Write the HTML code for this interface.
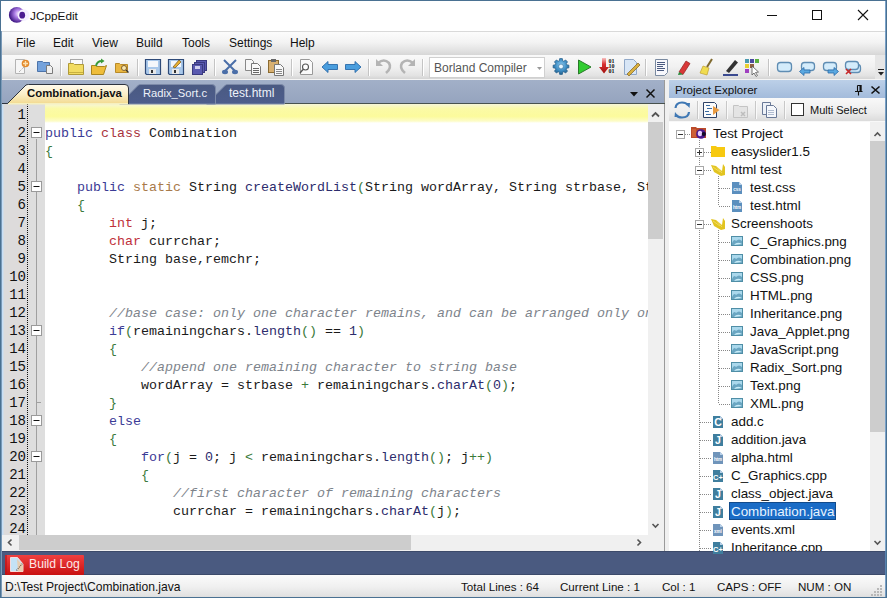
<!DOCTYPE html><html><head><meta charset="utf-8"><style>
*{margin:0;padding:0;box-sizing:border-box}
html,body{width:887px;height:598px;overflow:hidden;background:#fff}
body{position:relative;font-family:"Liberation Sans",sans-serif;font-size:12px;color:#000}
.a{position:absolute}
.t{position:absolute;white-space:nowrap;line-height:14px}
#title{left:0;top:0;width:887px;height:32px;background:#fff;border-bottom:1px solid #d9d9d9}
#menu{left:0;top:32px;width:887px;height:23px;background:linear-gradient(#fcfcfc,#f3f3f3 45%,#e2e2e2 80%,#d6d6d6)}
.mi{position:absolute;top:4px;font-size:12px;color:#111;line-height:14px}
#tb{left:0;top:55px;width:887px;height:25px;background:linear-gradient(#f9f9f9,#f1f1f1 50%,#e3e3e3 85%,#d4d4d4);border-bottom:1px solid #f4f4f4}
#tabs{left:0;top:80px;width:665px;height:24px;background:linear-gradient(#a2b0c8,#95a4be)}
#editor{left:0;top:104px;width:665px;height:431px;background:#fff;overflow:hidden}
.ln{position:absolute;left:0;width:26px;text-align:right;font-family:"Liberation Mono",monospace;font-size:14px;color:#111;height:18px;line-height:18px}
#code{left:45px;top:0;width:603px;height:431px;font-family:"Liberation Mono",monospace;font-size:13.33px;color:#1a1a1a}
.cl{height:18px;line-height:18px;padding-top:3px;white-space:pre}
.kw{color:#3b3b96}.cls{color:#a8333d}.st{color:#a87a4a}.br{color:#3a7a3a}.ty{color:#c0303a}.cm{color:#7e848c;font-style:italic}.fn{color:#2c2c6c}
#hsb{left:0;top:535px;width:665px;height:16px;background:#f0f0f0}
#bottombar{left:0;top:551px;width:887px;height:24px;background:#4a5a80;border-top:1px solid #3c4a6a;border-bottom:1px solid #3c4a6a}
#status{left:0;top:575px;width:887px;height:23px;background:linear-gradient(#fbfbfb,#f0f0f0 50%,#e2e2e2 90%,#d8d8d8)}
#split{left:665px;top:80px;width:4px;height:471px;background:#f0f0f0}
#pe{left:669px;top:80px;width:218px;height:471px;background:#fff}
.tr{position:absolute;height:18px;line-height:18px;font-size:13.4px;color:#0a0a0a;white-space:nowrap}
</style></head><body>
<div id="title" class="a"><span class="t" style="left:30px;top:8.5px;font-size:11.8px;color:#111">JCppEdit</span></div>
<div id="menu" class="a"><span class="mi" style="left:16px">File</span><span class="mi" style="left:53px">Edit</span><span class="mi" style="left:92px">View</span><span class="mi" style="left:136px">Build</span><span class="mi" style="left:182px">Tools</span><span class="mi" style="left:229px">Settings</span><span class="mi" style="left:290px">Help</span></div>
<div id="tb" class="a"></div>
<div id="tabs" class="a"></div>
<div id="editor" class="a">
<div class="a" style="left:0;top:0;width:28px;height:431px;background:#dddbdb"></div>
<div class="a" style="left:28px;top:0;width:17px;height:431px;background:#dedede"></div>
<div class="a" style="left:27px;top:0;width:1px;height:431px;background-image:linear-gradient(#111 50%,transparent 50%);background-size:1px 2px"></div>
<div class="ln" style="top:2px">1</div>
<div class="ln" style="top:20px">2</div>
<div class="ln" style="top:38px">3</div>
<div class="ln" style="top:56px">4</div>
<div class="ln" style="top:74px">5</div>
<div class="ln" style="top:92px">6</div>
<div class="ln" style="top:110px">7</div>
<div class="ln" style="top:128px">8</div>
<div class="ln" style="top:146px">9</div>
<div class="ln" style="top:164px">10</div>
<div class="ln" style="top:182px">11</div>
<div class="ln" style="top:200px">12</div>
<div class="ln" style="top:218px">13</div>
<div class="ln" style="top:236px">14</div>
<div class="ln" style="top:254px">15</div>
<div class="ln" style="top:272px">16</div>
<div class="ln" style="top:290px">17</div>
<div class="ln" style="top:308px">18</div>
<div class="ln" style="top:326px">19</div>
<div class="ln" style="top:344px">20</div>
<div class="ln" style="top:362px">21</div>
<div class="ln" style="top:380px">22</div>
<div class="ln" style="top:398px">23</div>
<div class="ln" style="top:416px">24</div>
<div class="a" style="left:45px;top:0;width:603px;height:19px;background:linear-gradient(#f6f6d8,#fbfaa6 25%,#fcfb9c 65%,#fdfcc8 90%,#ffffff)"></div>
<div id="code" class="a"><div class="cl"> </div><div class="cl"><span class="kw">public</span> <span class="cls">class</span> Combination</div><div class="cl"><span class="br">{</span></div><div class="cl"> </div><div class="cl">    <span class="kw">public</span> <span class="st">static</span> String <span class="fn">createWordList</span><span class="br">(</span>String wordArray, String strbase, St</div><div class="cl">    <span class="br">{</span></div><div class="cl">        <span class="ty">int</span> j;</div><div class="cl">        <span class="ty">char</span> currchar;</div><div class="cl">        String base,remchr;</div><div class="cl"> </div><div class="cl"> </div><div class="cl">        <span class="cm">//base case: only one character remains, and can be arranged only on</span></div><div class="cl">        <span class="kw">if</span><span class="br">(</span>remainingchars.<span class="fn">length</span><span class="br">()</span> == <span class="fn">1</span><span class="br">)</span></div><div class="cl">        <span class="br">{</span></div><div class="cl">            <span class="cm">//append one remaining character to string base</span></div><div class="cl">            wordArray = strbase <span class="br">+</span> remainingchars.<span class="fn">charAt</span><span class="br">(</span><span class="fn">0</span><span class="br">)</span>;</div><div class="cl">        <span class="br">}</span></div><div class="cl">        <span class="kw">else</span></div><div class="cl">        <span class="br">{</span></div><div class="cl">            <span class="kw">for</span><span class="br">(</span>j = <span class="fn">0</span>; j <span class="br">&lt;</span> remainingchars.<span class="fn">length</span><span class="br">()</span>; j<span class="br">++)</span></div><div class="cl">            <span class="br">{</span></div><div class="cl">                <span class="cm">//first character of remaining characters</span></div><div class="cl">                currchar = remainingchars.<span class="fn">charAt</span><span class="br">(</span>j<span class="br">)</span>;</div><div class="cl"> </div></div>
</div>
<div id="hsb" class="a"></div>
<div id="split" class="a"></div>
<div id="pe" class="a"></div>
<div id="bottombar" class="a"></div>
<div id="status" class="a"></div>
<svg class="a" style="left:0;top:0" width="887" height="598" viewBox="0 0 887 598">
<line x1="36.5" y1="139" x2="36.5" y2="535" stroke="#a0a0a0"/><line x1="36.5" y1="402.5" x2="41" y2="402.5" stroke="#a0a0a0"/><rect x="31.5" y="127.5" width="10" height="10" fill="#fff" stroke="#9a9a9a"/><line x1="33.5" y1="132.5" x2="39.5" y2="132.5" stroke="#111"/><rect x="31.5" y="181.5" width="10" height="10" fill="#fff" stroke="#9a9a9a"/><line x1="33.5" y1="186.5" x2="39.5" y2="186.5" stroke="#111"/><rect x="31.5" y="325.5" width="10" height="10" fill="#fff" stroke="#9a9a9a"/><line x1="33.5" y1="330.5" x2="39.5" y2="330.5" stroke="#111"/><rect x="31.5" y="415.5" width="10" height="10" fill="#fff" stroke="#9a9a9a"/><line x1="33.5" y1="420.5" x2="39.5" y2="420.5" stroke="#111"/><rect x="31.5" y="451.5" width="10" height="10" fill="#fff" stroke="#9a9a9a"/><line x1="33.5" y1="456.5" x2="39.5" y2="456.5" stroke="#111"/><rect x="648" y="104" width="16" height="431" fill="#f0f0f0"/><rect x="648" y="122" width="15" height="117" fill="#cdcdcd"/><path d="M652 116.5 L655.5 113 L659 116.5" fill="none" stroke="#555" stroke-width="1.8"/><path d="M652.5 524 L655.5 527 L658.5 524" fill="none" stroke="#555" stroke-width="1.6"/><rect x="19" y="535" width="392" height="15" fill="#cdcdcd"/><path d="M11.5 539.5 L8.5 542.5 L11.5 545.5" fill="none" stroke="#555" stroke-width="1.6"/><path d="M637.5 539.5 L640.5 542.5 L637.5 545.5" fill="none" stroke="#555" stroke-width="1.6"/><line x1="664.5" y1="80" x2="664.5" y2="551" stroke="#9a9a9a"/><line x1="0" y1="103.5" x2="665" y2="103.5" stroke="#48524e"/><defs><linearGradient id="gAct" x1="0" y1="0" x2="0" y2="1"><stop offset="0" stop-color="#fffbee"/><stop offset="0.5" stop-color="#fbefc8"/><stop offset="1" stop-color="#f2d98e"/></linearGradient><linearGradient id="gIn" x1="0" y1="0" x2="0" y2="1"><stop offset="0" stop-color="#4a5a82"/><stop offset="1" stop-color="#4d5d8c"/></linearGradient></defs><path d="M206.5 104 L225.5 85 Q226.5 84.5 228 84.5 L281 84.5 Q284.5 84.5 284.5 88 L284.5 104 Z" fill="url(#gIn)" stroke="#7c8aa8"/><path d="M119.5 104 L138.5 85 Q139.5 84.5 141 84.5 L212 84.5 Q215.5 84.5 215.5 88 L215.5 104 Z" fill="url(#gIn)" stroke="#7c8aa8"/><path d="M2 103.5 L7.5 103.5 L26 85 Q27 84.5 28.5 84.5 L125 84.5 Q128.5 84.5 128.5 88 L128.5 104" fill="url(#gAct)" stroke="#2e3440"/><rect x="8" y="103" width="120" height="1.5" fill="#f6f0c0"/><path d="M630 92 L638 92 L634 96.5 Z" fill="#111"/><path d="M646.5 89.5 L654.5 97.5 M654.5 89.5 L646.5 97.5" stroke="#111" stroke-width="1.5"/><defs><linearGradient id="gPe" x1="0" y1="0" x2="0" y2="1"><stop offset="0" stop-color="#bcd0e8"/><stop offset="1" stop-color="#a3bbdb"/></linearGradient><linearGradient id="gTb2" x1="0" y1="0" x2="0" y2="1"><stop offset="0" stop-color="#f9f9f9"/><stop offset="0.6" stop-color="#ececec"/><stop offset="1" stop-color="#d9d9d9"/></linearGradient></defs><rect x="669" y="80" width="217" height="18" fill="url(#gPe)"/><rect x="669" y="98" width="217" height="24" fill="url(#gTb2)"/><line x1="669" y1="121.5" x2="886" y2="121.5" stroke="#f8f8f8"/><path d="M857.5 85.5 L861 85.5 L861 91 M857.5 85.5 L857.5 91 M855 91.5 L862.5 91.5 M858.5 92 L858.5 95.5" stroke="#111" stroke-width="1.1" fill="none"/><rect x="859.5" y="85" width="1.8" height="6.5" fill="#111"/><path d="M871.5 86.5 L879.5 93.5 M879.5 86.5 L871.5 93.5" stroke="#111" stroke-width="1.6"/><rect x="791.5" y="103.5" width="12" height="12" fill="#fff" stroke="#333"/><rect x="870" y="122" width="15" height="429" fill="#f0f0f0"/><rect x="870" y="141" width="15" height="291" fill="#cdcdcd"/><path d="M874.5 136 L877.5 133 L880.5 136" fill="none" stroke="#555" stroke-width="1.6"/><path d="M874.5 541 L877.5 544 L880.5 541" fill="none" stroke="#555" stroke-width="1.6"/><rect x="729" y="502" width="107" height="18" fill="#1a6cc6"/><rect x="729.5" y="502.5" width="106" height="17" fill="none" stroke="#0a2a50" stroke-dasharray="1 1"/><defs><radialGradient id="gLogo" cx="0.62" cy="0.42" r="0.62"><stop offset="0" stop-color="#f8f0ff"/><stop offset="0.4" stop-color="#b080e8"/><stop offset="1" stop-color="#3a1280"/></radialGradient></defs><circle cx="16.8" cy="14.9" r="7.9" fill="url(#gLogo)"/><circle cx="23.6" cy="15.2" r="5.9" fill="#f6f0ff"/><ellipse cx="22.2" cy="15.2" rx="2.9" ry="3.4" fill="#4c1c90"/><line x1="767" y1="15.5" x2="777" y2="15.5" stroke="#111"/><rect x="812.5" y="10.5" width="9" height="9" fill="none" stroke="#111"/><path d="M858 10 L868 20 M868 10 L858 20" stroke="#111" stroke-width="1.1"/><line x1="60.5" y1="59" x2="60.5" y2="76" stroke="#c4c4c4"/><line x1="61.5" y1="59" x2="61.5" y2="76" stroke="#fff"/><line x1="137.5" y1="59" x2="137.5" y2="76" stroke="#c4c4c4"/><line x1="138.5" y1="59" x2="138.5" y2="76" stroke="#fff"/><line x1="214.5" y1="59" x2="214.5" y2="76" stroke="#c4c4c4"/><line x1="215.5" y1="59" x2="215.5" y2="76" stroke="#fff"/><line x1="291.5" y1="59" x2="291.5" y2="76" stroke="#c4c4c4"/><line x1="292.5" y1="59" x2="292.5" y2="76" stroke="#fff"/><line x1="368.5" y1="59" x2="368.5" y2="76" stroke="#c4c4c4"/><line x1="369.5" y1="59" x2="369.5" y2="76" stroke="#fff"/><line x1="422.5" y1="59" x2="422.5" y2="76" stroke="#c4c4c4"/><line x1="423.5" y1="59" x2="423.5" y2="76" stroke="#fff"/><line x1="645.5" y1="59" x2="645.5" y2="76" stroke="#c4c4c4"/><line x1="646.5" y1="59" x2="646.5" y2="76" stroke="#fff"/><line x1="768.5" y1="59" x2="768.5" y2="76" stroke="#c4c4c4"/><line x1="769.5" y1="59" x2="769.5" y2="76" stroke="#fff"/><path d="M15.5 59.5 L24.5 59.5 L24.5 73.5 L15.5 73.5 Z" fill="#f6f6f6" stroke="#b4b4b4"/><line x1="19" y1="72" x2="24" y2="67" stroke="#999" stroke-dasharray="1 1"/><circle cx="25.5" cy="63.5" r="3.8" fill="#e38a2c"/><path d="M23 63.5 L28 63.5 M25.5 61 L25.5 66" stroke="#fde0b0" stroke-width="1.4"/><path d="M37.5 61.5 L42.5 61.5 L43.5 62.5 L49.5 62.5 L49.5 71.5 L37.5 71.5 Z" fill="#74a2dc" stroke="#4d74aa"/><path d="M46.5 65.5 L50.5 65.5 L52.5 67.5 L52.5 73.5 L46.5 73.5 Z" fill="#efefef" stroke="#7a7a7a"/><rect x="70.5" y="59.5" width="12" height="6" fill="#fafafa" stroke="#a8a8a8"/><path d="M68.5 63.5 L73.5 63.5 L74.5 64.5 L83.5 64.5 L83.5 74.5 L68.5 74.5 Z" fill="#f2dc62" stroke="#b09a38"/><line x1="69" y1="72.5" x2="83" y2="72.5" stroke="#c8b040"/><path d="M91.5 65.5 L95.5 65.5 L96.5 66.5 L104.5 66.5 L106.5 65.5 L103.5 74.5 L91.5 74.5 Z" fill="#efbd3a" stroke="#a88420"/><path d="M96 66 Q97 61 102 61" stroke="#3a9a3a" stroke-width="2" fill="none"/><path d="M101 58.5 L104.5 61 L101 63.5 Z" fill="#3a9a3a"/><path d="M115.5 63.5 L119.5 63.5 L120.5 64.5 L127.5 64.5 L127.5 72.5 L115.5 72.5 Z" fill="#e9b640" stroke="#b88a28"/><circle cx="124" cy="68" r="2.5" fill="#f8e8b0" stroke="#806030"/><line x1="126" y1="70" x2="128.5" y2="72.5" stroke="#333" stroke-width="1.3"/><path d="M145.5 59.5 L160.5 59.5 L160.5 74.5 L146.5 74.5 L145.5 73.5 Z" fill="#a9c8ea" stroke="#2e4a78" stroke-width="1.2"/><rect x="148" y="61" width="10" height="6" fill="#f4f7fb"/><rect x="149" y="69" width="7" height="5" fill="#e8e8e8"/><rect x="151" y="70" width="2" height="3" fill="#333"/><path d="M168.5 59.5 L183.5 59.5 L183.5 74.5 L169.5 74.5 L168.5 73.5 Z" fill="#a9c8ea" stroke="#2e4a78" stroke-width="1.2"/><rect x="171" y="61" width="10" height="6" fill="#f4f7fb"/><rect x="172" y="69" width="7" height="5" fill="#e8e8e8"/><rect x="174" y="70" width="2" height="3" fill="#333"/><path d="M173 67 L179 60 L181 62 L175 68 Z" fill="#e8b030" stroke="#705020" stroke-width="0.7"/><rect x="196.5" y="60.5" width="10" height="10" fill="#5a5ab0" stroke="#3a3a80"/><rect x="194.5" y="62.5" width="10" height="10" fill="#5a5ab0" stroke="#3a3a80"/><rect x="192.5" y="64.5" width="10" height="10" fill="#5a5ab0" stroke="#3a3a80"/><rect x="195" y="66" width="5" height="3" fill="#d0d0f0"/><path d="M224 60 L236 72 M236 60 L224 72" stroke="#4a6ea8" stroke-width="2"/><ellipse cx="225" cy="72" rx="3" ry="2.2" fill="#4a6ea8"/><ellipse cx="235" cy="72" rx="3" ry="2.2" fill="#4a6ea8"/><path d="M245.5 59.5 L251.5 59.5 L253.5 61.5 L253.5 70.5 L245.5 70.5 Z" fill="#f6f6f6" stroke="#888"/><path d="M251.5 63.5 L257.5 63.5 L260.5 66.5 L260.5 74.5 L251.5 74.5 Z" fill="#f8f8f8" stroke="#777"/><path d="M253 68.5 L259 68.5 M253 70.5 L259 70.5 M253 72.5 L259 72.5" stroke="#666"/><rect x="268.5" y="60.5" width="10" height="12" fill="#d8b070" stroke="#8a6a30"/><rect x="271" y="59" width="5" height="3" fill="#666"/><path d="M274.5 64.5 L280.5 64.5 L283.5 67.5 L283.5 75.5 L274.5 75.5 Z" fill="#f8f8f8" stroke="#777"/><path d="M276 69.5 L282 69.5 M276 71.5 L282 71.5 M276 73.5 L282 73.5" stroke="#888"/><path d="M300.5 59.5 L309.5 59.5 L312.5 62.5 L312.5 74.5 L300.5 74.5 Z" fill="#fafafa" stroke="#999"/><circle cx="305.5" cy="67" r="3" fill="#fff" stroke="#555" stroke-width="1.1"/><line x1="303" y1="69.5" x2="300" y2="73" stroke="#555" stroke-width="1.3"/><path d="M322 67 L328 61.5 L328 64.5 L337.5 64.5 L337.5 69.5 L328 69.5 L328 72.5 Z" fill="#4a9ede" stroke="#2a6aa8" stroke-width="0.9"/><path d="M361 67 L355 61.5 L355 64.5 L345.5 64.5 L345.5 69.5 L355 69.5 L355 72.5 Z" fill="#4a9ede" stroke="#2a6aa8" stroke-width="0.9"/><path d="M378 63 Q384 58 389 63 Q392 68 386 73" stroke="#b4b4b4" stroke-width="2.6" fill="none"/><path d="M376 59 L376 66 L383 66 Z" fill="#b4b4b4"/><path d="M413 63 Q407 58 402 63 Q399 68 405 73" stroke="#b4b4b4" stroke-width="2.6" fill="none"/><path d="M415 59 L415 66 L408 66 Z" fill="#b4b4b4"/><rect x="429.5" y="57.5" width="115" height="20" fill="#fff" stroke="#d0d0d0"/><path d="M537 67 L542 67 L539.5 70 Z" fill="#999"/><defs><radialGradient id="gGear" cx="0.5" cy="0.4" r="0.6"><stop offset="0" stop-color="#8ccaf0"/><stop offset="0.6" stop-color="#3f8ec4"/><stop offset="1" stop-color="#23628f"/></radialGradient></defs><polygon points="568.88,65.15 568.88,67.85 566.64,68.24 566.22,69.25 567.53,71.12 565.62,73.03 563.75,71.72 562.74,72.14 562.35,74.38 559.65,74.38 559.26,72.14 558.25,71.72 556.38,73.03 554.47,71.12 555.78,69.25 555.36,68.24 553.12,67.85 553.12,65.15 555.36,64.76 555.78,63.75 554.47,61.88 556.38,59.97 558.25,61.28 559.26,60.86 559.65,58.62 562.35,58.62 562.74,60.86 563.75,61.28 565.62,59.97 567.53,61.88 566.22,63.75 566.64,64.76" fill="url(#gGear)" stroke="#235b88" stroke-width="0.7"/><circle cx="561" cy="66.5" r="2.4" fill="#e6f6ff" stroke="#2a6a98" stroke-width="0.6"/><path d="M578.5 60 L591 67 L578.5 74 Z" fill="#30cc30" stroke="#2a7a2a"/><defs><linearGradient id="gRA" x1="0" y1="0" x2="0" y2="1"><stop offset="0" stop-color="#f8c0c0"/><stop offset="0.4" stop-color="#d83030"/><stop offset="1" stop-color="#a01010"/></linearGradient></defs><path d="M602 58 L606 58 L606 67 L609 67 L604 73.5 L599 67 L602 67 Z" fill="url(#gRA)"/><text x="608.5" y="63" font-family="Liberation Serif" font-size="6" font-weight="bold" fill="#111">01</text><text x="608.5" y="68" font-family="Liberation Serif" font-size="6" font-weight="bold" fill="#111">10</text><text x="608.5" y="73" font-family="Liberation Serif" font-size="6" font-weight="bold" fill="#111">01</text><path d="M624.5 59.5 L633.5 59.5 L636.5 62.5 L636.5 74.5 L624.5 74.5 Z" fill="#d8e6f6" stroke="#90a8c8"/><path d="M627 74 L638 63 L640 65 L629 76 Z" fill="#d8b040" stroke="#806020" stroke-width="0.7"/><path d="M655.5 59.5 L667.5 59.5 L667.5 72.5 L664.5 75.5 L655.5 75.5 Z" fill="#f8f8fc" stroke="#7a8aa0"/><path d="M657 62.5 L665 62.5 M657 64.5 L665 64.5 M657 66.5 L663 66.5 M657 68.5 L665 68.5 M657 70.5 L664 70.5" stroke="#4a5a80"/><path d="M679 72 L686 61 L690 63.5 L683 74.5 Z" fill="#d83838" stroke="#902020" stroke-width="0.7"/><path d="M678 75 L679 72 L683 74.5 Z" fill="#2a8a3a"/><line x1="712" y1="59" x2="707" y2="67" stroke="#806a30" stroke-width="2"/><path d="M703 66 L709 68 L707 75 L700 73 Z" fill="#f0dc50" stroke="#c0a030" stroke-width="0.7"/><path d="M726 71 L735 60 L738 62.5 L729 73 Z" fill="#333"/><rect x="723" y="74" width="15" height="2" fill="#3a4a90"/><rect x="745" y="59" width="4" height="4" fill="#4a9ab0"/><rect x="750" y="59" width="4" height="4" fill="#4a4aa0"/><rect x="755" y="59" width="4" height="4" fill="#5ab040"/><rect x="745" y="64" width="4" height="4" fill="#e8d030"/><rect x="750" y="64" width="4" height="4" fill="#906040"/><rect x="745" y="69" width="4" height="4" fill="#a040c0"/><path d="M752 66 L752 75 L754 73 L756 76.5 L757.5 75.5 L755.5 72.5 L758.5 72 Z" fill="#fff" stroke="#555" stroke-width="0.8"/><rect x="777.5" y="62.5" width="14" height="9" rx="3" fill="#d4ecfb" stroke="#5f8db3" stroke-width="1.3"/><rect x="801.5" y="62.5" width="13" height="8" rx="3" fill="#d4ecfb" stroke="#5f8db3" stroke-width="1.3"/><path d="M799.5 71.5 L804 67.5 L804 70 L810 70 L810 73 L804 73 L804 75.5 Z" fill="#5aa8e0" stroke="#2a6aa8" stroke-width="0.8"/><rect x="823.5" y="62.5" width="13" height="8" rx="3" fill="#d4ecfb" stroke="#5f8db3" stroke-width="1.3"/><path d="M838.5 71.5 L834 67.5 L834 70 L828 70 L828 73 L834 73 L834 75.5 Z" fill="#5aa8e0" stroke="#2a6aa8" stroke-width="0.8"/><rect x="848.5" y="64.5" width="12" height="8" rx="3" fill="#d4ecfb" stroke="#5f8db3" stroke-width="1.3"/><rect x="845.5" y="61.5" width="13" height="8" rx="3" fill="#d4ecfb" stroke="#5f8db3" stroke-width="1.3"/><path d="M846 69 L851 74 M851 69 L846 74" stroke="#c82828" stroke-width="1.6"/><rect x="875" y="55" width="10" height="24" fill="#e6e6e6"/><line x1="878" y1="69.5" x2="884" y2="69.5" stroke="#222"/><path d="M878 72 L884 72 L881 75.5 Z" fill="#222"/><path d="M675.5 108 Q676 102.5 682 102.5 Q686 102.5 688 105" stroke="#3f78b4" stroke-width="2.2" fill="none"/><path d="M685 103 L690 103 L689.5 108 Z" fill="#3f78b4"/><path d="M689 112 Q688.5 117.5 682 117.5 Q678 117.5 676 115" stroke="#3f78b4" stroke-width="2.2" fill="none"/><path d="M679 117 L674.5 117 L675 112 Z" fill="#3f78b4"/><line x1="697.5" y1="101" x2="697.5" y2="119" stroke="#c8c8c8"/><line x1="698.5" y1="101" x2="698.5" y2="119" stroke="#fafafa"/><line x1="726.5" y1="101" x2="726.5" y2="119" stroke="#c8c8c8"/><line x1="727.5" y1="101" x2="727.5" y2="119" stroke="#fafafa"/><line x1="755.5" y1="101" x2="755.5" y2="119" stroke="#c8c8c8"/><line x1="756.5" y1="101" x2="756.5" y2="119" stroke="#fafafa"/><line x1="784.5" y1="101" x2="784.5" y2="119" stroke="#c8c8c8"/><line x1="785.5" y1="101" x2="785.5" y2="119" stroke="#fafafa"/><path d="M703.5 102.5 L714.5 102.5 L716.5 104.5 L716.5 117.5 L703.5 117.5 Z" fill="#fbfbfb" stroke="#2e4266"/><path d="M706 105.5 L710 105.5 M707 108.5 L712 108.5 M705 111.5 L709 111.5 M706 114.5 L711 114.5" stroke="#3a6aa0"/><path d="M713 106 L719.5 110 L713 115 Z" fill="#e89a40"/><path d="M733.5 105.5 L738.5 105.5 L739.5 106.5 L747.5 106.5 L747.5 117.5 L733.5 117.5 Z" fill="#e4e4e4" stroke="#c4c4c4"/><path d="M741 112 L745 116 M745 112 L741 116" stroke="#bdbdbd" stroke-width="1.5"/><path d="M762.5 102.5 L770.5 102.5 L770.5 114.5 L762.5 114.5 Z" fill="#eef2f8" stroke="#6a7a98"/><path d="M766.5 105.5 L773.5 105.5 L776.5 108.5 L776.5 117.5 L766.5 117.5 Z" fill="#f6f8fc" stroke="#6a7a98"/><path d="M768 110.5 L774 110.5 M768 112.5 L774 112.5 M768 114.5 L774 114.5" stroke="#b0bcd0"/><defs><linearGradient id="gBL" x1="0" y1="0" x2="0" y2="1"><stop offset="0" stop-color="#f04040"/><stop offset="1" stop-color="#c81010"/></linearGradient></defs><rect x="5" y="555" width="79" height="20" rx="1" fill="url(#gBL)"/><rect x="5" y="555" width="2" height="20" fill="#b81018" opacity="0.6"/><path d="M10.5 557.5 L17.5 557.5 L23 564 L23 571.5 L10.5 571.5 Z" fill="#c4e2f6" stroke="#fbe4e4" stroke-width="0.9"/><path d="M17 559 L23 565.5 L23 571.5 L18 571.5 Z" fill="#f0c8a0" opacity="0.8"/><path d="M16.5 570.5 L22.5 563.5" stroke="#705848" stroke-width="1.2" stroke-dasharray="1 1"/><line x1="699.5" y1="140" x2="699.5" y2="551" stroke="#888" stroke-dasharray="1 1"/><rect x="676.5" y="130.5" width="8" height="8" fill="#fff" stroke="#a8a8a8"/><line x1="678" y1="134.5" x2="683" y2="134.5" stroke="#333"/><line x1="685" y1="134.5" x2="691" y2="134.5" stroke="#888" stroke-dasharray="1 1"/><path d="M691 127 L696 127 L697 128 L706 128 L706 138 L691 138 Z" fill="#bb4a2a"/><rect x="692" y="129" width="4" height="8" fill="#d87040" opacity="0.6"/><circle cx="701" cy="134" r="4.8" fill="#4a1890"/><ellipse cx="700" cy="133.5" rx="2.2" ry="2.8" fill="#e8d0ff"/><circle cx="703.8" cy="134" r="2.1" fill="#140c28"/><rect x="695.5" y="148.5" width="8" height="8" fill="#fff" stroke="#a8a8a8"/><line x1="697" y1="152.5" x2="702" y2="152.5" stroke="#333"/><line x1="699.5" y1="150" x2="699.5" y2="155" stroke="#333"/><line x1="704" y1="152.5" x2="711" y2="152.5" stroke="#888" stroke-dasharray="1 1"/><path d="M711 146 L716 146 L717 147 L725 147 L725 157 L711 157 Z" fill="#f7c910"/><rect x="695.5" y="166.5" width="8" height="8" fill="#fff" stroke="#a8a8a8"/><line x1="697" y1="170.5" x2="702" y2="170.5" stroke="#333"/><line x1="704" y1="170.5" x2="711" y2="170.5" stroke="#888" stroke-dasharray="1 1"/><path d="M711 165 L716 166 L722 171 L723 164 L725 167 L725 175 L721 176 L714 172 Z" fill="#e2c420"/><path d="M713 167 L720 172 M716 166 L722 173" stroke="#f4e070" stroke-width="0.8"/><rect x="695.5" y="220.5" width="8" height="8" fill="#fff" stroke="#a8a8a8"/><line x1="697" y1="224.5" x2="702" y2="224.5" stroke="#333"/><line x1="704" y1="224.5" x2="711" y2="224.5" stroke="#888" stroke-dasharray="1 1"/><path d="M711 219 L716 220 L722 225 L723 218 L725 221 L725 229 L721 230 L714 226 Z" fill="#e2c420"/><path d="M713 221 L720 226 M716 220 L722 227" stroke="#f4e070" stroke-width="0.8"/><line x1="718.5" y1="176" x2="718.5" y2="206" stroke="#888" stroke-dasharray="1 1"/><line x1="718.5" y1="230" x2="718.5" y2="404" stroke="#888" stroke-dasharray="1 1"/><line x1="719" y1="188.5" x2="731" y2="188.5" stroke="#888" stroke-dasharray="1 1"/><path d="M732 182 L739 182 L742 185 L742 194 L732 194 Z" fill="#5b8fbe"/><path d="M739 182 L739 185 L742 185" fill="#b8d0e8"/><text x="737" y="191" font-family="Liberation Sans" font-size="4.5" font-weight="bold" fill="#fff" text-anchor="middle">css</text><line x1="719" y1="206.5" x2="731" y2="206.5" stroke="#888" stroke-dasharray="1 1"/><path d="M732 200 L739 200 L742 203 L742 212 L732 212 Z" fill="#5b8fbe"/><path d="M739 200 L739 203 L742 203" fill="#b8d0e8"/><text x="737" y="209" font-family="Liberation Sans" font-size="4.5" font-weight="bold" fill="#fff" text-anchor="middle">htm</text><line x1="719" y1="242.5" x2="731" y2="242.5" stroke="#888" stroke-dasharray="1 1"/><rect x="731.5" y="236.5" width="11" height="9" fill="#aad8ec" stroke="#4f8ea6"/><path d="M732 243 Q734 238 736 241 Q739 238 742 241 L742 245 L732 245 Z" fill="#5a9ab8" opacity="0.8"/><path d="M734 245 Q737 241 742 244" fill="#c8ecf8"/><line x1="719" y1="260.5" x2="731" y2="260.5" stroke="#888" stroke-dasharray="1 1"/><rect x="731.5" y="254.5" width="11" height="9" fill="#aad8ec" stroke="#4f8ea6"/><path d="M732 261 Q734 256 736 259 Q739 256 742 259 L742 263 L732 263 Z" fill="#5a9ab8" opacity="0.8"/><path d="M734 263 Q737 259 742 262" fill="#c8ecf8"/><line x1="719" y1="278.5" x2="731" y2="278.5" stroke="#888" stroke-dasharray="1 1"/><rect x="731.5" y="272.5" width="11" height="9" fill="#aad8ec" stroke="#4f8ea6"/><path d="M732 279 Q734 274 736 277 Q739 274 742 277 L742 281 L732 281 Z" fill="#5a9ab8" opacity="0.8"/><path d="M734 281 Q737 277 742 280" fill="#c8ecf8"/><line x1="719" y1="296.5" x2="731" y2="296.5" stroke="#888" stroke-dasharray="1 1"/><rect x="731.5" y="290.5" width="11" height="9" fill="#aad8ec" stroke="#4f8ea6"/><path d="M732 297 Q734 292 736 295 Q739 292 742 295 L742 299 L732 299 Z" fill="#5a9ab8" opacity="0.8"/><path d="M734 299 Q737 295 742 298" fill="#c8ecf8"/><line x1="719" y1="314.5" x2="731" y2="314.5" stroke="#888" stroke-dasharray="1 1"/><rect x="731.5" y="308.5" width="11" height="9" fill="#aad8ec" stroke="#4f8ea6"/><path d="M732 315 Q734 310 736 313 Q739 310 742 313 L742 317 L732 317 Z" fill="#5a9ab8" opacity="0.8"/><path d="M734 317 Q737 313 742 316" fill="#c8ecf8"/><line x1="719" y1="332.5" x2="731" y2="332.5" stroke="#888" stroke-dasharray="1 1"/><rect x="731.5" y="326.5" width="11" height="9" fill="#aad8ec" stroke="#4f8ea6"/><path d="M732 333 Q734 328 736 331 Q739 328 742 331 L742 335 L732 335 Z" fill="#5a9ab8" opacity="0.8"/><path d="M734 335 Q737 331 742 334" fill="#c8ecf8"/><line x1="719" y1="350.5" x2="731" y2="350.5" stroke="#888" stroke-dasharray="1 1"/><rect x="731.5" y="344.5" width="11" height="9" fill="#aad8ec" stroke="#4f8ea6"/><path d="M732 351 Q734 346 736 349 Q739 346 742 349 L742 353 L732 353 Z" fill="#5a9ab8" opacity="0.8"/><path d="M734 353 Q737 349 742 352" fill="#c8ecf8"/><line x1="719" y1="368.5" x2="731" y2="368.5" stroke="#888" stroke-dasharray="1 1"/><rect x="731.5" y="362.5" width="11" height="9" fill="#aad8ec" stroke="#4f8ea6"/><path d="M732 369 Q734 364 736 367 Q739 364 742 367 L742 371 L732 371 Z" fill="#5a9ab8" opacity="0.8"/><path d="M734 371 Q737 367 742 370" fill="#c8ecf8"/><line x1="719" y1="386.5" x2="731" y2="386.5" stroke="#888" stroke-dasharray="1 1"/><rect x="731.5" y="380.5" width="11" height="9" fill="#aad8ec" stroke="#4f8ea6"/><path d="M732 387 Q734 382 736 385 Q739 382 742 385 L742 389 L732 389 Z" fill="#5a9ab8" opacity="0.8"/><path d="M734 389 Q737 385 742 388" fill="#c8ecf8"/><line x1="719" y1="404.5" x2="731" y2="404.5" stroke="#888" stroke-dasharray="1 1"/><rect x="731.5" y="398.5" width="11" height="9" fill="#aad8ec" stroke="#4f8ea6"/><path d="M732 405 Q734 400 736 403 Q739 400 742 403 L742 407 L732 407 Z" fill="#5a9ab8" opacity="0.8"/><path d="M734 407 Q737 403 742 406" fill="#c8ecf8"/><line x1="700" y1="422.5" x2="711" y2="422.5" stroke="#888" stroke-dasharray="1 1"/><path d="M713 416 L720 416 L723 419 L723 428 L713 428 Z" fill="#3f7e9e"/><path d="M720 416 L720 419 L723 419" fill="#b8d0e8"/><text x="718" y="426" font-family="Liberation Sans" font-size="10.5" font-weight="bold" fill="#fff" text-anchor="middle">C</text><line x1="700" y1="440.5" x2="711" y2="440.5" stroke="#888" stroke-dasharray="1 1"/><path d="M713 434 L720 434 L723 437 L723 446 L713 446 Z" fill="#3f7e9e"/><path d="M720 434 L720 437 L723 437" fill="#b8d0e8"/><text x="718" y="444" font-family="Liberation Sans" font-size="10.5" font-weight="bold" fill="#fff" text-anchor="middle">J</text><line x1="700" y1="458.5" x2="711" y2="458.5" stroke="#888" stroke-dasharray="1 1"/><path d="M713 452 L720 452 L723 455 L723 464 L713 464 Z" fill="#6f94ba"/><path d="M720 452 L720 455 L723 455" fill="#b8d0e8"/><text x="718" y="461" font-family="Liberation Sans" font-size="4.5" font-weight="bold" fill="#fff" text-anchor="middle">htm</text><line x1="700" y1="476.5" x2="711" y2="476.5" stroke="#888" stroke-dasharray="1 1"/><path d="M713 470 L720 470 L723 473 L723 482 L713 482 Z" fill="#3f7e9e"/><path d="M720 470 L720 473 L723 473" fill="#b8d0e8"/><text x="718" y="480" font-family="Liberation Sans" font-size="7.5" font-weight="bold" fill="#fff" text-anchor="middle">C+</text><line x1="700" y1="494.5" x2="711" y2="494.5" stroke="#888" stroke-dasharray="1 1"/><path d="M713 488 L720 488 L723 491 L723 500 L713 500 Z" fill="#3f7e9e"/><path d="M720 488 L720 491 L723 491" fill="#b8d0e8"/><text x="718" y="498" font-family="Liberation Sans" font-size="10.5" font-weight="bold" fill="#fff" text-anchor="middle">J</text><line x1="700" y1="512.5" x2="711" y2="512.5" stroke="#888" stroke-dasharray="1 1"/><path d="M713 506 L720 506 L723 509 L723 518 L713 518 Z" fill="#3f7e9e"/><path d="M720 506 L720 509 L723 509" fill="#b8d0e8"/><text x="718" y="516" font-family="Liberation Sans" font-size="10.5" font-weight="bold" fill="#fff" text-anchor="middle">J</text><line x1="700" y1="530.5" x2="711" y2="530.5" stroke="#888" stroke-dasharray="1 1"/><path d="M713 524 L720 524 L723 527 L723 536 L713 536 Z" fill="#6f94ba"/><path d="M720 524 L720 527 L723 527" fill="#b8d0e8"/><text x="718" y="533" font-family="Liberation Sans" font-size="4.5" font-weight="bold" fill="#fff" text-anchor="middle">xml</text><line x1="700" y1="548.5" x2="711" y2="548.5" stroke="#888" stroke-dasharray="1 1"/><path d="M713 542 L720 542 L723 545 L723 554 L713 554 Z" fill="#3f7e9e"/><path d="M720 542 L720 545 L723 545" fill="#b8d0e8"/><text x="718" y="552" font-family="Liberation Sans" font-size="7.5" font-weight="bold" fill="#fff" text-anchor="middle">C+</text><rect x="880" y="585" width="2" height="2" fill="#b8b8b8"/><rect x="877" y="588" width="2" height="2" fill="#b8b8b8"/><rect x="880" y="588" width="2" height="2" fill="#b8b8b8"/><rect x="874" y="591" width="2" height="2" fill="#b8b8b8"/><rect x="877" y="591" width="2" height="2" fill="#b8b8b8"/><rect x="880" y="591" width="2" height="2" fill="#b8b8b8"/><rect x="871" y="594" width="2" height="2" fill="#b8b8b8"/><rect x="874" y="594" width="2" height="2" fill="#b8b8b8"/><rect x="877" y="594" width="2" height="2" fill="#b8b8b8"/><rect x="880" y="594" width="2" height="2" fill="#b8b8b8"/>
<rect x="0.5" y="0.5" width="886" height="597" fill="none" stroke="#4a7192"/><line x1="885.5" y1="1" x2="885.5" y2="597" stroke="#5a8cbc" opacity="0.8"/><line x1="1.5" y1="31" x2="1.5" y2="597" stroke="#7a9ab8"/><line x1="2.5" y1="104" x2="2.5" y2="535" stroke="#c6def6"/><line x1="3.5" y1="104" x2="3.5" y2="535" stroke="#d4dee8"/>
</svg>
<span class="t" style="left:27px;top:86px;font-weight:bold;font-size:11.4px;color:#111">Combination.java</span><span class="t" style="left:143px;top:86px;font-size:11.2px;color:#eef2fa">Radix_Sort.c</span><span class="t" style="left:229px;top:86px;font-size:12px;color:#eef2fa">test.html</span><span class="t" style="left:29px;top:557px;font-size:12.2px;color:#fde8e8">Build Log</span><span class="t" style="left:434px;top:61px;font-size:12px;color:#555">Borland Compiler</span><span class="t" style="left:675px;top:83px;font-size:11.6px;color:#111">Project Explorer</span><span class="t" style="left:810px;top:103px;font-size:11px;color:#111">Multi Select</span><span class="t" style="left:5px;top:580px;font-size:12.1px;color:#111">D:\Test Project\Combination.java</span><span class="t" style="left:461px;top:580px;font-size:11.6px;color:#111">Total Lines : 64</span><span class="t" style="left:560px;top:580px;font-size:11.6px;color:#111">Current Line : 1</span><span class="t" style="left:662px;top:580px;font-size:11.6px;color:#111">Col : 1</span><span class="t" style="left:717px;top:580px;font-size:11.6px;color:#111">CAPS : OFF</span><span class="t" style="left:798px;top:580px;font-size:11.6px;color:#111">NUM : ON</span><div class="a" style="left:669px;top:122px;width:201px;height:429px;overflow:hidden"><span class="tr" style="left:44px;top:3px;color:#111">Test Project</span><span class="tr" style="left:62px;top:21px;color:#111">easyslider1.5</span><span class="tr" style="left:62px;top:39px;color:#111">html test</span><span class="tr" style="left:81px;top:57px;color:#111">test.css</span><span class="tr" style="left:81px;top:75px;color:#111">test.html</span><span class="tr" style="left:62px;top:93px;color:#111">Screenshoots</span><span class="tr" style="left:81px;top:111px;color:#111">C_Graphics.png</span><span class="tr" style="left:81px;top:129px;color:#111">Combination.png</span><span class="tr" style="left:81px;top:147px;color:#111">CSS.png</span><span class="tr" style="left:81px;top:165px;color:#111">HTML.png</span><span class="tr" style="left:81px;top:183px;color:#111">Inheritance.png</span><span class="tr" style="left:81px;top:201px;color:#111">Java_Applet.png</span><span class="tr" style="left:81px;top:219px;color:#111">JavaScript.png</span><span class="tr" style="left:81px;top:237px;color:#111">Radix_Sort.png</span><span class="tr" style="left:81px;top:255px;color:#111">Text.png</span><span class="tr" style="left:81px;top:273px;color:#111">XML.png</span><span class="tr" style="left:62px;top:291px;color:#111">add.c</span><span class="tr" style="left:62px;top:309px;color:#111">addition.java</span><span class="tr" style="left:62px;top:327px;color:#111">alpha.html</span><span class="tr" style="left:62px;top:345px;color:#111">C_Graphics.cpp</span><span class="tr" style="left:62px;top:363px;color:#111">class_object.java</span><span class="tr" style="left:62px;top:381px;color:#e8f4ff">Combination.java</span><span class="tr" style="left:62px;top:399px;color:#111">events.xml</span><span class="tr" style="left:62px;top:417px;color:#111">Inheritance.cpp</span></div>
</body></html>
